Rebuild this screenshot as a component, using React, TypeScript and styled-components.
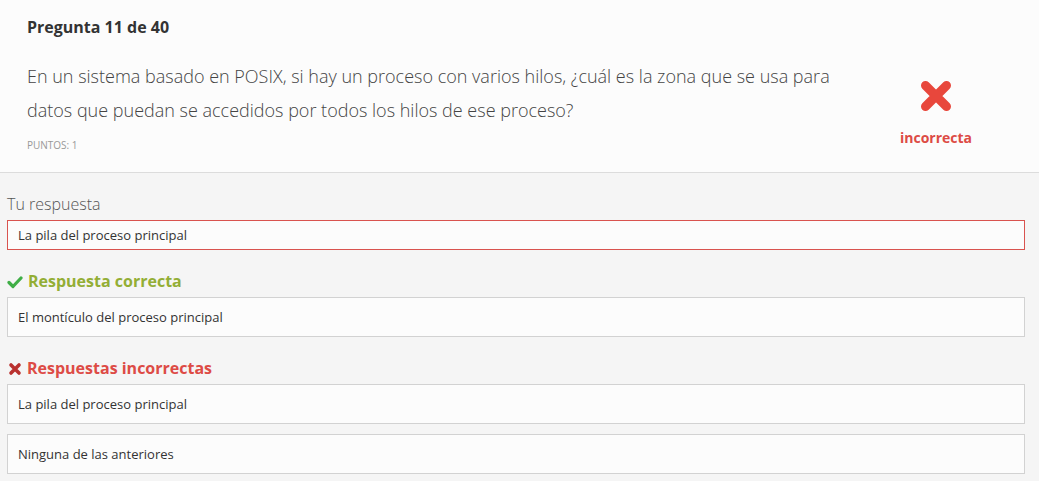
import React from "react";
import styled, { createGlobalStyle } from "styled-components";

const Global = createGlobalStyle`
  html, body { margin: 0; padding: 0; background: #f5f5f5; }
  body { font-family: "Open Sans", "Liberation Sans", sans-serif; color: #333; }
`;

const Header = styled.header`
  display: grid;
  grid-template-columns: 1fr 150px;
  background: #fcfcfc;
  border-bottom: 1px solid #dcdcdc;
  padding: 15px 28px 20px 27px;
`;

const QuestionCol = styled.div`
  display: flex;
  flex-direction: column;
`;

const Title = styled.h2`
  margin: 0;
  font-size: 16px;
  font-weight: 700;
  line-height: 24px;
  color: #333;
`;

const Question = styled.p`
  margin: 20px 0 0;
  font-size: 18px;
  font-weight: 300;
  line-height: 34px;
  color: #444;
`;

const Points = styled.div`
  margin-top: 11px;
  font-size: 10px;
  line-height: 14px;
  color: #999;
  text-transform: uppercase;
`;

const Verdict = styled.div`
  display: flex;
  flex-direction: column;
  align-items: center;
  justify-content: flex-start;
  padding-top: 64px;
  gap: 15px;
`;

const VerdictLabel = styled.span`
  font-size: 14px;
  font-weight: 700;
  line-height: 20px;
  color: #dd4b45;
`;

const Body = styled.main`
  padding: 20px 14px 8px 7px;
  display: flex;
  flex-direction: column;
`;

const Label = styled.div`
  font-size: 16px;
  font-weight: 300;
  line-height: 22px;
  color: #555;
  margin-bottom: 5px;
`;

const SectionHeading = styled.h3<{ $tone: "ok" | "bad" }>`
  margin: 20px 0 5px;
  display: flex;
  align-items: center;
  gap: 5px;
  font-size: 16px;
  font-weight: 700;
  line-height: 22px;
  color: ${(p) => (p.$tone === "ok" ? "#93ae35" : "#dd4b45")};
`;

const AnswerBox = styled.div<{ $wrong?: boolean; $compact?: boolean }>`
  box-sizing: border-box;
  height: ${(p) => (p.$compact ? 30 : 40)}px;
  display: flex;
  align-items: center;
  padding: 0 10px;
  background: #fcfcfc;
  border: 1px solid ${(p) => (p.$wrong ? "#d9534f" : "#d2d2d2")};
  font-size: 13px;
  color: #333;
  & + & { margin-top: 10px; }
`;

const BigX = () => (
  <svg width="34" height="34" viewBox="0 0 34 34" style={{ display: "block" }}>
    <path
      d="M6.5 6.5 L27.5 27.5 M27.5 6.5 L6.5 27.5"
      stroke="#e8473c"
      strokeWidth="9"
      strokeLinecap="round"
    />
  </svg>
);

const SmallX = () => (
  <svg width="14" height="14" viewBox="0 0 14 14" style={{ marginLeft: 1, marginTop: 2 }}>
    <path d="M3 3 L11 11 M11 3 L3 11" stroke="#b9312f" strokeWidth="3.6" strokeLinecap="round" />
  </svg>
);

const Check = () => (
  <svg width="16" height="14" viewBox="0 0 16 14" style={{ marginTop: 2 }}>
    <path d="M2 7.5 L6 11.5 L14 3" fill="none" stroke="#3fae46" strokeWidth="3.2" strokeLinecap="round" strokeLinejoin="round" />
  </svg>
);

export default function App() {
  return (
    <>
      <Global />
      <Header>
        <QuestionCol>
          <Title>Pregunta 11 de 40</Title>
          <Question>
            En un sistema basado en POSIX, si hay un proceso con varios hilos, ¿cuál es la zona que se usa para datos que puedan se accedidos por todos los hilos de ese proceso?
          </Question>
          <Points>Puntos: 1</Points>
        </QuestionCol>
        <Verdict>
          <BigX />
          <VerdictLabel>incorrecta</VerdictLabel>
        </Verdict>
      </Header>
      <Body>
        <Label>Tu respuesta</Label>
        <AnswerBox $wrong $compact>La pila del proceso principal</AnswerBox>
        <SectionHeading $tone="ok">
          <Check />
          Respuesta correcta
        </SectionHeading>
        <AnswerBox>El montículo del proceso principal</AnswerBox>
        <SectionHeading $tone="bad">
          <SmallX />
          Respuestas incorrectas
        </SectionHeading>
        <AnswerBox>La pila del proceso principal</AnswerBox>
        <AnswerBox>Ninguna de las anteriores</AnswerBox>
      </Body>
    </>
  );
}
